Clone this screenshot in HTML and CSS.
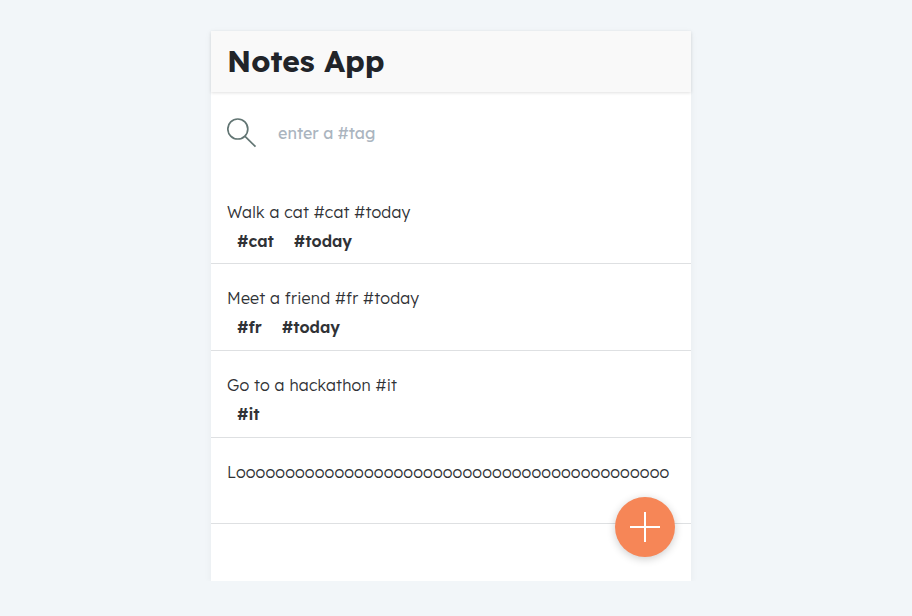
FILE: index.html
```html
<!DOCTYPE html>
<html lang="en">
<head>
<meta charset="utf-8">
<title>Notes App</title>
<link rel="stylesheet" href="styles.css">
</head>
<body>
<main class="app">
  <header class="header"><h1 class="title">Notes App</h1></header>
  <div class="search">
    <svg class="search-icon" viewBox="0 0 30 30" fill="none" stroke="#627573" stroke-width="1.7"><circle cx="10.8" cy="11" r="10"/><path d="M17.8 18.2L28.5 28.7"/></svg>
    <span class="placeholder">enter a #tag</span>
  </div>
  <ul class="notes">
    <li class="note"><p class="text">Walk a cat #cat #today</p><div class="tags"><b>#cat</b><b>#today</b></div></li>
    <li class="note"><p class="text">Meet a friend #fr #today</p><div class="tags"><b>#fr</b><b>#today</b></div></li>
    <li class="note"><p class="text">Go to a hackathon #it</p><div class="tags"><b>#it</b></div></li>
    <li class="note"><p class="text long">Loooooooooooooooooooooooooooooooooooooooooooo</p></li>
  </ul>
  <button class="add" aria-label="Add note"><svg viewBox="0 0 30 30" stroke="#fff" stroke-width="2"><path d="M15 0V30M0 15H30"/></svg></button>
</main>
</body>
</html>
```
FILE: styles.css
```css
* { box-sizing: border-box; }
body { margin: 0; padding-top: 31px; background: #f2f6f9; color: #303236; font: 400 16px/20px Lexend, Inter, sans-serif; }
.app { position: relative; width: 480px; height: 550px; margin-left: 211px; background: #fff; box-shadow: 0 2px 8px rgba(0,0,0,.05); }
.header { height: 61px; padding: 10px 16px; background: #f9f9f9; box-shadow: 0 1px 3px rgba(0,0,0,.12); }
.title { margin: 0; color: #212429; font-size: 30px; line-height: 40px; font-weight: 700; }
.search { display: flex; align-items: center; gap: 21px; height: 82px; padding: 0 16px; }
.search-icon { width: 30px; height: 30px; }
.placeholder { color: #abb5bf; }
.notes { list-style: none; margin: 0; padding: 3.6px 0 0; }
.note { height: 86.67px; padding: 24px 16px 0; border-bottom: 1px solid #dee0e2; }
.text { margin: 0; white-space: nowrap; font-weight: 300; letter-spacing: .19px; }
.long { letter-spacing: .14px; }
.tags { display: flex; gap: 20px; padding: 9px 10px 0; }
.tags b { font-weight: 600; }
.add { position: absolute; right: 16px; bottom: 24px; width: 60px; height: 60px; padding: 15px; border: 0; border-radius: 50%; background: #f68657; box-shadow: 0 2px 8px rgba(0,0,0,.2); }
.add svg { display: block; }
```
